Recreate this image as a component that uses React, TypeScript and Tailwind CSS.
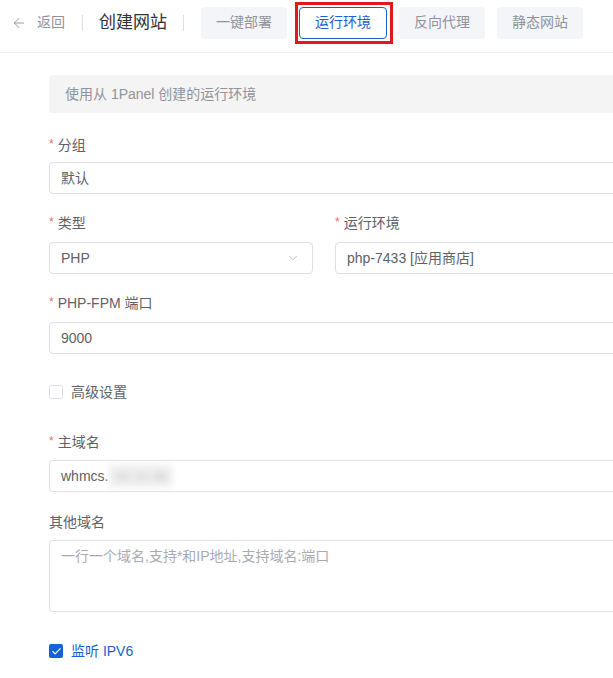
import { ArrowLeft, ChevronDown, Check } from "lucide-react";

const font = { fontFamily: '"Liberation Sans", "Noto Sans CJK SC", sans-serif' };

function Label({ text, required = true }: { text: string; required?: boolean }) {
  return (
    <div className="h-[22px] flex items-center text-[14px] text-[#606266] leading-[22px]">
      {required && <span className="text-[#f56c6c] text-[12px] mr-[4px] -mt-[3px]">*</span>}
      {text}
    </div>
  );
}

function Input({ value, className = "" }: { value?: React.ReactNode; className?: string }) {
  return (
    <div
      className={`h-[32px] border border-[#dcdfe6] rounded-[4px] flex items-center px-[11px] text-[14px] text-[#606266] bg-white ${className}`}
    >
      {value}
    </div>
  );
}

const tabs = ["一键部署", "运行环境", "反向代理", "静态网站"];

export default function App() {
  return (
    <div className="w-[613px] h-[678px] overflow-hidden bg-white" style={font}>
      {/* header */}
      <div className="h-[53px] border-b border-[#ebeef5] flex items-center pl-[11px] pb-[7px]">
        <ArrowLeft size={16} strokeWidth={1.4} className="text-[#909399]" />
        <span className="ml-[10px] text-[14px] text-[#909399]">返回</span>
        <div className="w-px h-[16px] bg-[#dcdfe6] ml-[17px]" />
        <span className="ml-[16px] text-[17px] text-[#303133]">创建网站</span>
        <div className="w-px h-[16px] bg-[#dcdfe6] ml-[16px]" />
        <div className="flex items-center gap-[12px] ml-[17px]">
          {tabs.map((t) =>
            t === "运行环境" ? (
              <div key={t} className="relative">
                <div className="w-[88px] h-[32px] rounded-[4px] border border-[#1c5fce] bg-white text-[#1c5fce] text-[14px] flex items-center justify-center">
                  {t}
                </div>
                <div className="absolute -left-[4px] -right-[6px] -top-[5px] -bottom-[5px] border-[3px] border-[#e5171c] pointer-events-none" />
              </div>
            ) : (
              <div
                key={t}
                className="w-[86px] h-[32px] rounded-[4px] bg-[#f4f5f9] text-[#909399] text-[14px] flex items-center justify-center"
              >
                {t}
              </div>
            )
          )}
        </div>
      </div>

      {/* form */}
      <div className="pl-[49px] pt-[22px] w-[640px]">
        <div className="h-[38px] bg-[#f4f4f5] rounded-[4px] flex items-center px-[16px] text-[14px] text-[#909399]">
          使用从 1Panel 创建的运行环境
        </div>

        <div className="mt-[21px]">
          <Label text="分组" />
          <Input value="默认" className="mt-[6px]" />
        </div>

        <div className="mt-[18px] grid grid-cols-[264px_1fr] gap-x-[22px]">
          <div>
            <Label text="类型" />
            <Input
              className="mt-[8px] justify-between"
              value={
                <>
                  <span>PHP</span>
                  <ChevronDown size={14} strokeWidth={1.3} className="text-[#a8abb2] mr-[1px]" />
                </>
              }
            />
          </div>
          <div>
            <Label text="运行环境" />
            <Input className="mt-[8px]" value="php-7433 [应用商店]" />
          </div>
        </div>

        <div className="mt-[18px]">
          <Label text="PHP-FPM 端口" />
          <Input value="9000" className="mt-[8px]" />
        </div>

        <div className="mt-[27px] h-[22px] flex items-center">
          <div className="w-[14px] h-[14px] border border-[#dcdfe6] rounded-[2px] bg-white" />
          <span className="ml-[8px] text-[14px] text-[#606266]">高级设置</span>
        </div>

        <div className="mt-[28px]">
          <Label text="主域名" />
          <Input
            className="mt-[7px]"
            value={
              <>
                <span>whmcs.</span>
                <span className="ml-[1px] w-[63px] h-[22px] bg-[#eeeeee] blur-[3px] flex items-center justify-around px-[4px]">
                  <span className="w-[14px] h-[7px] bg-[#dfdfdf]" />
                  <span className="w-[14px] h-[7px] bg-[#e2e2e2]" />
                  <span className="w-[12px] h-[7px] bg-[#dadada]" />
                </span>
              </>
            }
          />
        </div>

        <div className="mt-[19px]">
          <Label text="其他域名" required={false} />
          <div className="mt-[7px] h-[72px] border border-[#dcdfe6] rounded-[4px] px-[11px] pt-[4px] text-[14px] leading-[22px] text-[#a8abb2]">
            一行一个域名,支持*和IP地址,支持域名:端口
          </div>
        </div>

        <div className="mt-[28px] h-[22px] flex items-center">
          <div className="w-[14px] h-[14px] rounded-[2px] bg-[#1561d6] flex items-center justify-center">
            <Check size={11} strokeWidth={2.5} className="text-white" />
          </div>
          <span className="ml-[8px] text-[14px] text-[#1c5fce]">监听 IPV6</span>
        </div>
      </div>
    </div>
  );
}
